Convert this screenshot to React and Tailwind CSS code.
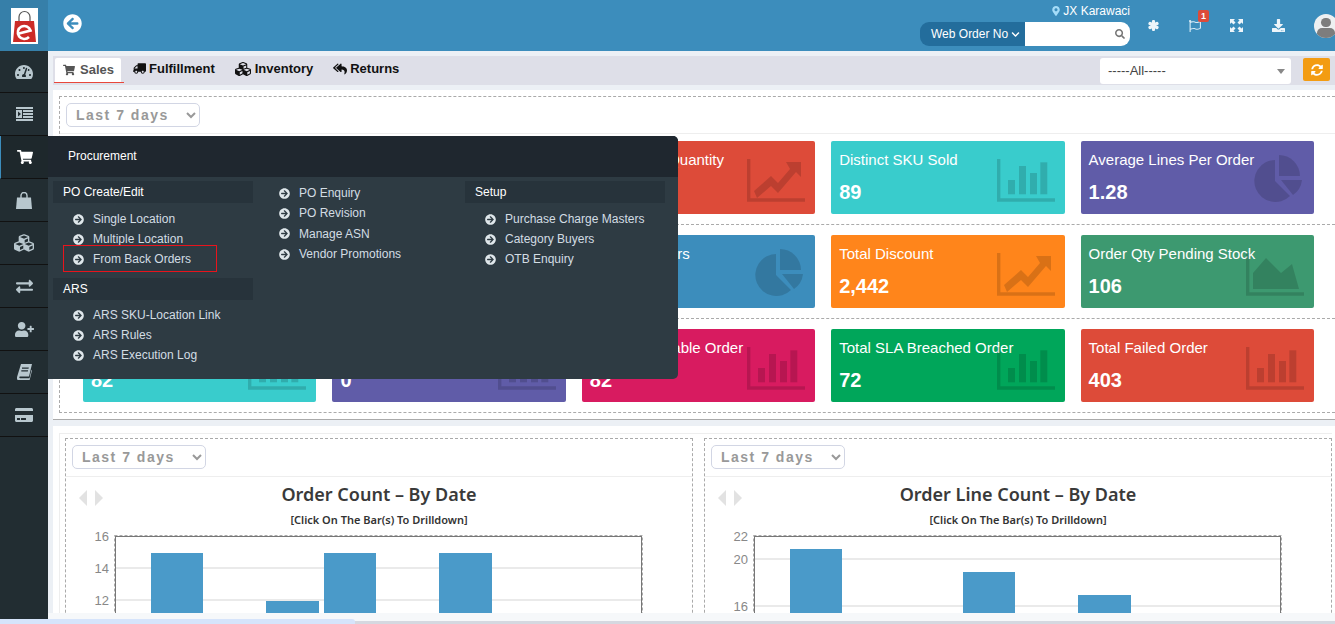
import {
  FaArrowCircleLeft, FaArrowCircleRight, FaChevronDown, FaCreditCard, FaCubes, FaDownload,
  FaExchangeAlt, FaMapMarkerAlt, FaRegFlag, FaReplyAll, FaSearch,
  FaShoppingCart, FaSyncAlt, FaTachometerAlt, FaTruck, FaUserPlus,
} from 'react-icons/fa'

function BarsIcon() {
  return (
    <svg width="58" height="43" viewBox="0 0 58 43" fill="currentColor">
      <path d="M0 0h3.4v39.3H58v3.4H0z" />
      <rect x="11" y="21" width="7" height="14.3" />
      <rect x="22" y="7" width="7" height="28.3" />
      <rect x="33" y="14" width="7" height="21.3" />
      <rect x="43.3" y="3.3" width="7" height="32" />
    </svg>
  )
}

function LineIcon() {
  return (
    <svg width="58" height="43" viewBox="0 0 58 43" fill="currentColor">
      <path d="M0 0h3.4v39.3H58v3.4H0z" />
      <path d="M7 32 24 17l7 7 12-14-4-7h15v15l-5-5-18 21-7-7-14 12z" />
    </svg>
  )
}

function AreaIcon() {
  return (
    <svg width="58" height="43" viewBox="0 0 58 43" fill="currentColor">
      <path d="M0 0h3.4v39.3H58v3.4H0z" />
      <path d="M7 20 20 5l15 15 11-9 7 25H7z" />
    </svg>
  )
}

function PieIcon() {
  return (
    <svg width="48" height="47" viewBox="0 0 48 47" fill="currentColor">
      <path d="M21 26V5A21 21 0 1 0 36 41Z" />
      <path d="M25 0A21 21 0 0 1 46 21H25Z" />
      <path d="M27 25H48A21 21 0 0 1 39 40Z" />
    </svg>
  )
}

function IndentIcon() {
  return (
    <svg width="17" height="14" viewBox="0 0 17 14" fill="currentColor">
      <path d="M0 0h17v2H0zM0 12h17v2H0zM0 3h6v8H0zM7 3h10v2H7zM7 6h10v2H7zM7 9h10v2H7z" />
      <path d="M2 4.5 5 7 2 9.5z" fill="#222d32" />
    </svg>
  )
}

function BagIcon() {
  return (
    <svg width="16" height="17" viewBox="0 0 16 17" fill="currentColor">
      <path d="M1 5.5h14l1 11.5H0z" />
      <path d="M5 8V3.5a3 3 0 0 1 6 0V8" fill="none" stroke="currentColor" strokeWidth="1.4" />
    </svg>
  )
}

function SlantBookIcon() {
  return (
    <svg width="15" height="16" viewBox="0 0 15 16" fill="currentColor">
      <path d="M4 0h11l-3 12.5H3c-1 0-1 1.7 0 1.7h9.5l2-8.5.5.8-2.5 10H2C.2 16.500-.4 14.500.2 12.500zM5 3.500v1.200h6.500l.3-1.200zM4.300 6.300v1.200h6.500l.3-1.200z" fillRule="evenodd" />
    </svg>
  )
}

function AsteriskIcon() {
  return (
    <svg width="11" height="11" viewBox="0 0 11 11" stroke="currentColor" strokeWidth="3.200" strokeLinecap="round">
      <path d="M5.500 1.500v8M2 3.500l7 4M2 7.500l7-4" />
    </svg>
  )
}

function ExpandIcon() {
  return (
    <svg width="13" height="13" viewBox="0 0 13 13" fill="currentColor">
      <path d="M0 0h5L3.500 1.500 5.500 3.500 3.500 5.500 1.500 3.500 0 5zM13 0v5L11.500 3.500 9.500 5.500 7.500 3.500 9.500 1.500 8 0zM0 13V8l1.500 1.500 2-2 2 2-2 2L5 13zM13 13H8l1.500-1.500-2-2 2-2 2 2L13 8z" />
    </svg>
  )
}

const CHART_ICONS = {
  bars: { Icon: BarsIcon, pos: 'right-[10px] bottom-[12px]' },
  line: { Icon: LineIcon, pos: 'right-[10px] bottom-[12px]' },
  area: { Icon: AreaIcon, pos: 'right-[10px] bottom-[12px]' },
  pie: { Icon: PieIcon, pos: 'right-[12px] bottom-[12px]' },
}

const CARD_ROWS = [
  [
    { title: 'Total Order', value: '82', bg: 'bg-[#3c8dbc]', icon: 'bars' },
    { title: 'Total Order Value', value: '1,24,510', bg: 'bg-[#00a65a]', icon: 'bars' },
    { title: 'Total Order Quantity', value: '105', bg: 'bg-[#dd4b39]', icon: 'line' },
    { title: 'Distinct SKU Sold', value: '89', bg: 'bg-[#39cccc]', icon: 'bars' },
    { title: 'Average Lines Per Order', value: '1.28', bg: 'bg-[#605ca8]', icon: 'pie' },
  ],
  [
    { title: 'Average Order Value', value: '1,518', bg: 'bg-[#ff851b]', icon: 'line' },
    { title: 'Total Shipping', value: '0', bg: 'bg-[#d81b60]', icon: 'bars' },
    { title: 'Distinct Buyers', value: '78', bg: 'bg-[#3c8dbc]', icon: 'pie' },
    { title: 'Total Discount', value: '2,442', bg: 'bg-[#ff851b]', icon: 'line' },
    { title: 'Order Qty Pending Stock', value: '106', bg: 'bg-[#3d9970]', icon: 'area' },
  ],
  [
    { title: 'Total Pending Order', value: '82', bg: 'bg-[#39cccc]', icon: 'bars' },
    { title: 'Total Hold Order', value: '0', bg: 'bg-[#605ca8]', icon: 'bars' },
    { title: 'Total Deliverable Order', value: '82', bg: 'bg-[#d81b60]', icon: 'bars' },
    { title: 'Total SLA Breached Order', value: '72', bg: 'bg-[#00a65a]', icon: 'bars' },
    { title: 'Total Failed Order', value: '403', bg: 'bg-[#dd4b39]', icon: 'bars' },
  ],
]

const SIDE_ITEMS = [
  { icon: <FaTachometerAlt size={18} /> },
  { icon: <IndentIcon /> },
  { icon: <FaShoppingCart size={16} />, active: true },
  { icon: <BagIcon /> },
  { icon: <FaCubes size={20} /> },
  { icon: <FaExchangeAlt size={17} /> },
  { icon: <FaUserPlus size={19} /> },
  { icon: <SlantBookIcon /> },
  { icon: <FaCreditCard size={18} /> },
]

function Card({ title, value, bg, icon }) {
  const { Icon, pos } = CHART_ICONS[icon]
  return (
    <div className={`${bg} h-[73px] rounded-[2px] relative text-white pl-[8px] pt-[10px]`}>
      <div className="text-[15px] leading-[18px] whitespace-nowrap">{title}</div>
      <div className="text-[20px] leading-[24px] font-bold mt-[11px]">{value}</div>
      <div className={`absolute ${pos} text-black/15`}>
        <Icon />
      </div>
    </div>
  )
}

function RangeSelect() {
  return (
    <select className="h-6 w-[134px] border border-[#d2d6e4] rounded-[5px] bg-white pl-[5px] text-[14px] font-bold tracking-[1.5px] text-[#999]">
      <option>Last 7 days</option>
    </select>
  )
}

function MenuLink({ label, rowClass = 'h-5' }) {
  return (
    <div className={`${rowClass} flex items-center pl-[20px] text-[12px] text-[#d3dde3]`}>
      <FaArrowCircleRight size={11} className="text-[#dfe7eb] shrink-0" />
      <span className="ml-[9px] whitespace-nowrap">{label}</span>
    </div>
  )
}

function MenuHeading({ label }) {
  return <div className="h-[22px] bg-[#27333b] pl-[10px] flex items-center text-[12px] text-white">{label}</div>
}

function ProcurementMenu() {
  return (
    <div className="absolute left-[48px] top-[136px] w-[630px] h-[243px] z-20 bg-[#2e3b43] rounded-r-[5px] overflow-hidden">
      <div className="h-[41px] bg-[#1f272f] pl-[20px] pb-[2px] flex items-center text-[12px] text-white">Procurement</div>
      <div className="flex pt-[4px] pl-[5px]">
        <div className="w-[200px]">
          <MenuHeading label="PO Create/Edit" />
          <div className="pt-[6px] pb-[9px] relative">
            <MenuLink label="Single Location" />
            <MenuLink label="Multiple Location" />
            <MenuLink label="From Back Orders" />
            {/* red annotation box from the screenshot */}
            <div className="absolute left-[10px] top-[42px] w-[154px] h-[27px] border border-[#e8141c]" />
          </div>
          <MenuHeading label="ARS" />
          <div className="pt-[5px]">
            <MenuLink label="ARS SKU-Location Link" />
            <MenuLink label="ARS Rules" />
            <MenuLink label="ARS Execution Log" />
          </div>
        </div>
        <div className="w-[212px] pl-[6px] pt-[2px]">
          <MenuLink label="PO Enquiry" rowClass="h-[20.3px]" />
          <MenuLink label="PO Revision" rowClass="h-[20.3px]" />
          <MenuLink label="Manage ASN" rowClass="h-[20.3px]" />
          <MenuLink label="Vendor Promotions" rowClass="h-[20.3px]" />
        </div>
        <div className="w-[200px]">
          <MenuHeading label="Setup" />
          <div className="pt-[6px]">
            <MenuLink label="Purchase Charge Masters" />
            <MenuLink label="Category Buyers" />
            <MenuLink label="OTB Enquiry" />
          </div>
        </div>
      </div>
    </div>
  )
}

function BarChart({ title, labels, grid, bars }) {
  return (
    <div className="border border-dashed border-[#aaa] h-[200px] overflow-hidden">
      <div className="h-[38px] pl-[6px] pt-[6px] border-b border-[#eee]">
        <RangeSelect />
      </div>
      <div className="relative">
        <svg className="absolute left-[13px] top-[13px]" width="24" height="16" viewBox="0 0 24 16" fill="#e2e2e2">
          <path d="M8 0v16L0 8zM16 0v16l8-8z" />
        </svg>
        <div className="text-center pt-[5px] text-[18px] leading-[24px] font-semibold text-[#3a3a3a] font-['Noto_Sans',sans-serif]">{title}</div>
        <div className="text-center mt-[7px] text-[11px] leading-[14px] font-semibold text-[#333] font-['Noto_Sans',sans-serif]">[Click On The Bar(s) To Drilldown]</div>
        <svg className="block -mt-px" width="628" height="100" viewBox="0 0 628 100">
          <rect x="49.500" y="10.500" width="526" height="120" fill="white" stroke="#777" strokeWidth="1" />
          <rect x="48.500" y="9.500" width="528" height="120" fill="none" stroke="#aaa" strokeDasharray="3 2" />
          {grid.map((y) => (
            <line key={y} x1="50" x2="575" y1={y} y2={y} stroke="#d5d5d5" />
          ))}
          {bars.map(([x, y, w]) => (
            <rect key={x} x={x} y={y} width={w} height={100} fill="#4a9ac9" />
          ))}
          {labels.map(([text, y]) => (
            <text key={text} x="43" y={y + 5} textAnchor="end" fontSize="13" fill="#888" fontFamily="'Liberation Sans', sans-serif">{text}</text>
          ))}
        </svg>
      </div>
    </div>
  )
}

export default function App() {
  return (
    <div className="relative w-[1335px] h-[624px] overflow-hidden bg-[#ecf0f5] font-['Liberation_Sans',Arial,sans-serif]">
      <header className="h-[51px] bg-[#3c8dbc] flex">
        <div className="w-[48px] bg-[#367fa9] flex items-center justify-center">
          <div className="w-[27px] h-[36px] bg-white">
            <svg width="27" height="36" viewBox="0 0 27 36">
              <path d="M8 13V9a5.500 5.500 0 0 1 11 0v4" fill="none" stroke="#555" strokeWidth="1.200" />
              <path d="M4 13h19l2 21H2z" fill="#cb2b27" />
              <path d="M8 25.500 19.500 22.500A6.500 6.500 0 1 0 18 29" fill="none" stroke="white" strokeWidth="2.600" />
            </svg>
          </div>
        </div>
        <div className="pl-[15px] pt-[14px]">
          <FaArrowCircleLeft size={19} className="text-white" />
        </div>
        <div className="ml-auto w-[210px] pt-[3px] mr-[205px] shrink-0">
          <div className="flex justify-end items-center h-[16px] text-[12px] text-white">
            <FaMapMarkerAlt size={10} className="text-[#a5dcf8] mr-[2px]" />
            JX Karawaci
          </div>
          <div className="flex h-6 mt-[3px] rounded-[9px] overflow-hidden">
            <div className="w-[105px] bg-[#236d9c] text-white text-[12px] flex items-center pl-[11px] whitespace-nowrap">
              Web Order No
              <FaChevronDown size={9} className="ml-[3px]" />
            </div>
            <div className="flex-1 bg-white flex items-center justify-end pr-[5px]">
              <FaSearch size={10} className="text-[#777]" />
            </div>
          </div>
        </div>
        <div className="absolute top-0 left-[1148px] h-[51px] flex items-center text-[#eef5fa]">
          <AsteriskIcon />
          <div className="relative ml-[30px] text-[#d5eaf6]">
            <FaRegFlag size={12} />
            <span className="absolute left-[9px] -top-[10px] w-[11px] h-[12px] rounded-[2px] bg-[#dd4b39] text-white text-[9px] leading-[12px] font-bold text-center">1</span>
          </div>
          <div className="ml-[29px]"><ExpandIcon /></div>
          <FaDownload size={13} className="ml-[29px]" />
          <div className="ml-[29px] w-[24px] h-[24px] rounded-full bg-[#eef0f1] overflow-hidden flex flex-col items-center shrink-0">
            <span className="mt-[4px] w-[10px] h-[10px] rounded-full bg-[#7d7d7d]" />
            <span className="mt-px w-[18px] h-[10px] rounded-t-[5px] bg-[#7d7d7d]" />
          </div>
        </div>
      </header>

      <div className="flex h-[568px]">
        <aside className="w-[48px] shrink-0 bg-[#222d32]">
          {SIDE_ITEMS.map(({ icon, active }, i) => (
            <div
              key={i}
              className={`flex items-center justify-center border-b border-[#111] ${i === 0 ? 'h-[42px]' : 'h-[43px]'} ${active ? 'bg-[#1e282c] border-l border-l-[#3c8dbc] text-white' : 'text-[#b8c7ce]'}`}
            >
              {icon}
            </div>
          ))}
        </aside>

        <main className="flex-1 min-w-0 pt-[5px] pl-[5px]">
          <div className="h-[29px] bg-[#dedfe8] flex items-start">
            <div className="ml-px mt-[2px] w-[70px] h-[25px] border-b border-[#e8473a]">
              <div className="w-[66px] ml-px h-[24px] bg-white rounded-t-[2px] flex items-center pl-[9px] text-[13px] font-bold text-[#555]">
                <FaShoppingCart size={12} className="mr-[5px] -ml-px" />
                Sales
              </div>
            </div>
            <div className="flex items-center h-[25px] text-[13px] font-bold text-[#111] ml-[9px]">
              <FaTruck size={13} className="mr-[3px] -scale-x-100" />
              Fulfillment
              <FaCubes size={16} className="ml-[20px] mr-[4px]" />
              Inventory
              <FaReplyAll size={14} className="ml-[20px] mr-[3px]" />
              Returns
            </div>
            <div className="ml-auto mr-[5px] flex mt-[2px]">
              <div className="w-[191px] h-[26px] bg-white rounded-[3px] pl-[8px] flex items-center justify-between text-[13px] text-[#444]">
                -----All-----
                <span className="w-0 h-0 mr-[6px] border-x-[4px] border-x-transparent border-t-[5px] border-t-[#888]" />
              </div>
              <div className="ml-[12px] w-[27px] h-[23px] bg-[#f39c12] rounded-[2px] flex items-center justify-center text-white">
                <FaSyncAlt size={12} />
              </div>
            </div>
          </div>

          <section className="mt-[5px] h-[330px] bg-white pl-[6px] pt-[6px] border-b border-[#aaa]">
            <div className="h-[317px] border-l border-t border-b border-dashed border-[#aaa]">
              <div className="h-[37px] pl-[6px] pt-[6px] border-b border-[#eee]">
                <RangeSelect />
              </div>
              {CARD_ROWS.map((row, i) => (
                <div key={i} className={`grid grid-cols-5 gap-x-[16px] pl-[23px] pr-[21px] ${i === 0 ? 'pt-[7px]' : 'pt-[10px]'} ${i < 2 ? 'pb-[10px] border-b border-dashed border-[#aaa]' : ''}`}>
                  {row.map((card) => (
                    <Card key={card.title} {...card} />
                  ))}
                </div>
              ))}
            </div>
          </section>

          <section className="mt-[6px] bg-white pl-[6px] pt-[7px] h-[190px]">
            <div className="border-t border-l border-[#eee] pl-[5px] pt-[4px] grid grid-cols-2 gap-x-[11px] w-[1273px] h-[200px]">
              <BarChart
                title="Order Count – By Date"
                grid={[42, 74]}
                bars={[[85, 27, 52], [200, 75, 53], [258, 27, 52], [373, 27, 53]]}
                labels={[['16', 10], ['14', 42], ['12', 74]]}
              />
              <BarChart
                title="Order Line Count – By Date"
                grid={[33, 80]}
                bars={[[85, 23, 52], [258, 46, 52], [373, 69, 53]]}
                labels={[['22', 10], ['20', 33], ['16', 80]]}
              />
            </div>
          </section>
        </main>
      </div>

      <ProcurementMenu />

      {/* horizontal scrollbar along the bottom */}
      <div className="absolute left-[48px] right-0 top-[613px] h-[8px] z-30 bg-[#f6f8fa]" />
      <div className="absolute left-[48px] right-0 top-[621px] h-[3px] z-30 bg-[#d5d8e0]" />
      <div className="absolute left-0 top-[619px] w-[355px] h-[5px] z-30 bg-[#d6e4fb] rounded-tr-[3px]" />
    </div>
  )
}
